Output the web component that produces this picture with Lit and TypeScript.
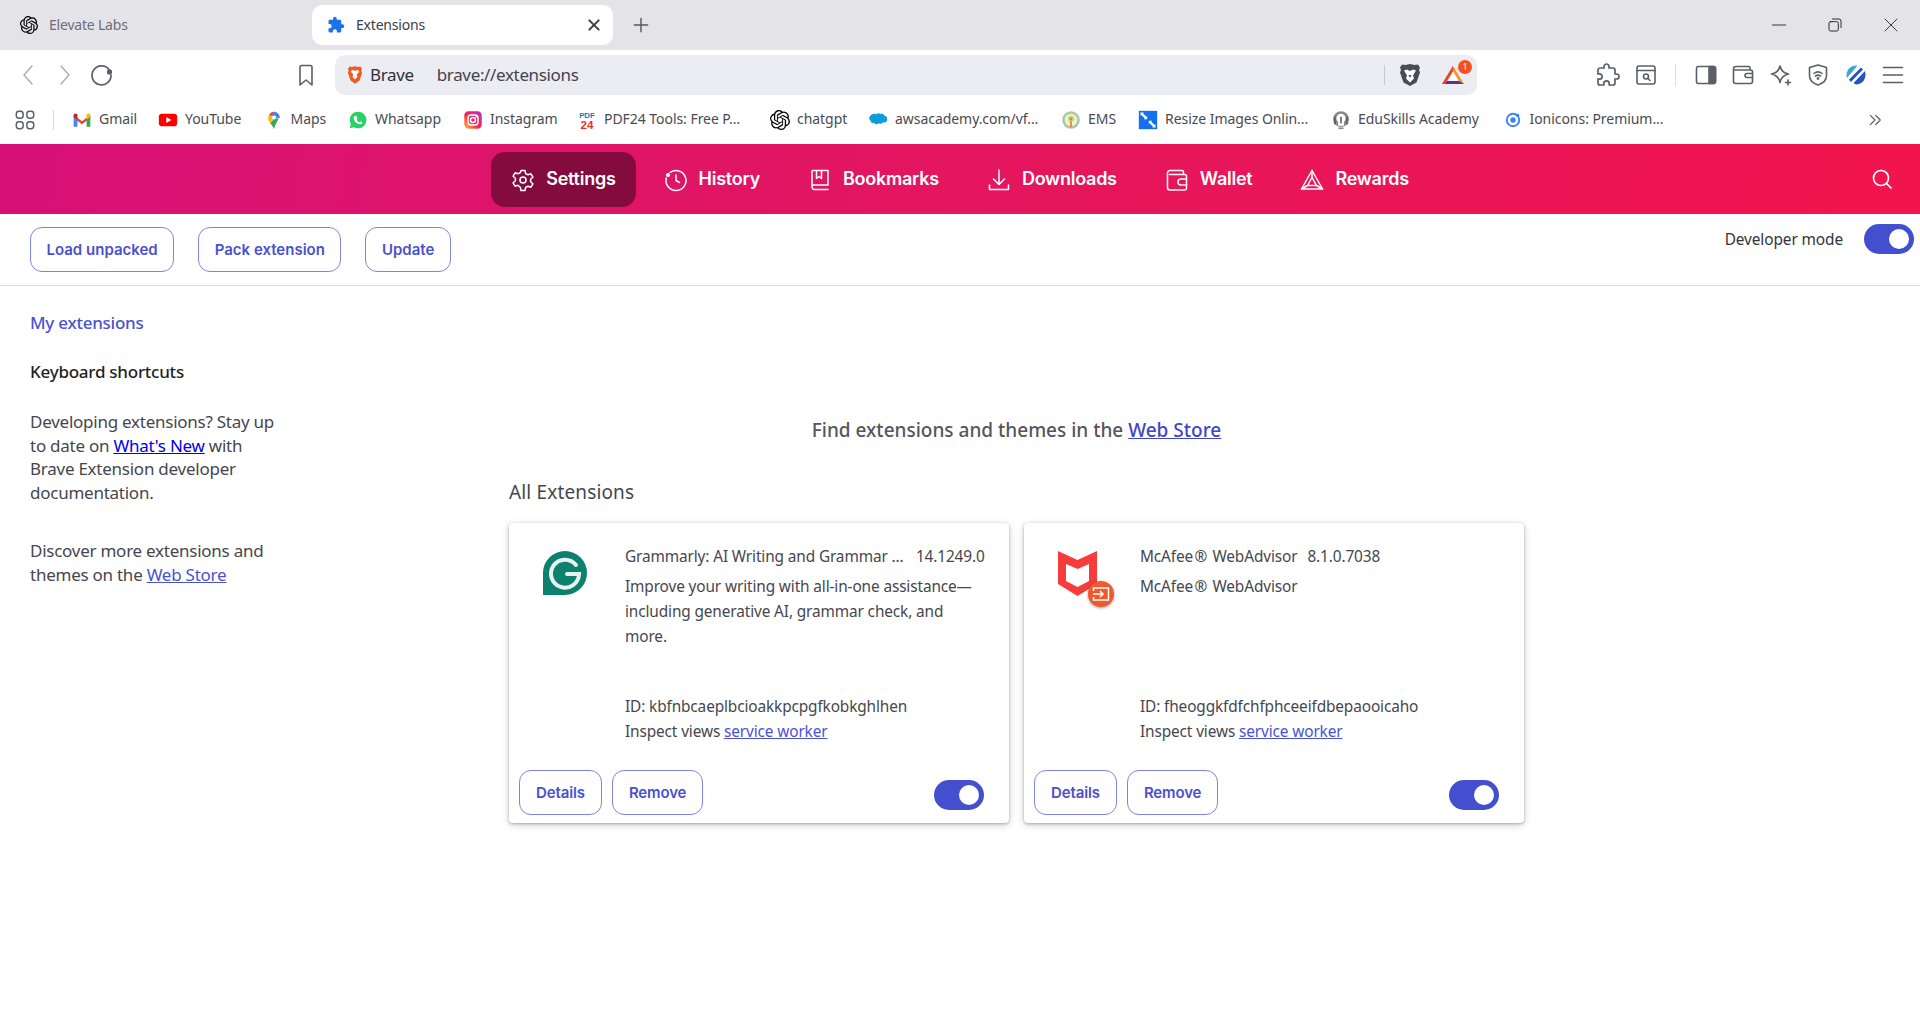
import { LitElement, css, html, svg } from 'lit';
import { customElement, property } from 'lit/decorators.js';

const openAi = svg`<path d="M22.2819 9.8211a5.9847 5.9847 0 0 0-.5157-4.9108 6.0462 6.0462 0 0 0-6.5098-2.9A6.0651 6.0651 0 0 0 4.9807 4.1818a5.9847 5.9847 0 0 0-3.9977 2.9 6.0462 6.0462 0 0 0 .7427 7.0966 5.98 5.98 0 0 0 .511 4.9107 6.051 6.051 0 0 0 6.5146 2.9001A5.9847 5.9847 0 0 0 13.2599 24a6.0557 6.0557 0 0 0 5.7718-4.2058 5.9894 5.9894 0 0 0 3.9977-2.9001 6.0557 6.0557 0 0 0-.7475-7.0729zm-9.022 12.6081a4.4755 4.4755 0 0 1-2.8764-1.0408l.1419-.0804 4.7783-2.7582a.7948.7948 0 0 0 .3927-.6813v-6.7369l2.02 1.1686a.071.071 0 0 1 .038.052v5.5826a4.504 4.504 0 0 1-4.4945 4.4944zm-9.6607-4.1254a4.4708 4.4708 0 0 1-.5346-3.0137l.142.0852 4.783 2.7582a.7712.7712 0 0 0 .7806 0l5.8428-3.3685v2.3324a.0804.0804 0 0 1-.0332.0615L9.74 19.9502a4.4992 4.4992 0 0 1-6.1408-1.6464zM2.3408 7.8956a4.485 4.485 0 0 1 2.3655-1.9728V11.6a.7664.7664 0 0 0 .3879.6765l5.8144 3.3543-2.0201 1.1685a.0757.0757 0 0 1-.071 0l-4.8303-2.7865A4.504 4.504 0 0 1 2.3408 7.872zm16.5963 3.8558L13.1038 8.364 15.1192 7.2a.0757.0757 0 0 1 .071 0l4.8303 2.7913a4.4944 4.4944 0 0 1-.6765 8.1042v-5.6772a.79.79 0 0 0-.407-.667zm2.0107-3.0231l-.142-.0852-4.7735-2.7818a.7759.7759 0 0 0-.7854 0L9.409 9.2297V6.8974a.0662.0662 0 0 1 .0284-.0615l4.8303-2.7866a4.4992 4.4992 0 0 1 6.6802 4.66zM8.3065 12.863l-2.02-1.1638a.0804.0804 0 0 1-.038-.0567V6.0742a4.4992 4.4992 0 0 1 7.3757-3.4537l-.142.0805L8.704 5.459a.7948.7948 0 0 0-.3927.6813zm1.0976-2.3654l2.602-1.4998 2.6069 1.4998v2.9994l-2.5974 1.4997-2.6067-1.4997Z"/>`;
const puzzle = 'M20.5 11H19V7c0-1.1-.9-2-2-2h-4V3.5C13 2.12 11.88 1 10.5 1S8 2.12 8 3.5V5H4c-1.1 0-1.99.9-1.99 2v3.8H3.5c1.49 0 2.7 1.21 2.7 2.7s-1.21 2.7-2.7 2.7H2V20c0 1.1.9 2 2 2h3.8v-1.5c0-1.49 1.21-2.7 2.7-2.7 1.49 0 2.7 1.21 2.7 2.7V22H17c1.1 0 2-.9 2-2v-4h1.5c1.38 0 2.5-1.12 2.5-2.5S21.88 11 20.5 11z';

const line = (size: number, body: unknown, color = '#5d5e68', width = 1.6) =>
  html`<svg width=${size} height=${size} viewBox="0 0 24 24" fill="none" stroke=${color} stroke-width=${width} stroke-linecap="round" stroke-linejoin="round">${body}</svg>`;
const solid = (size: number, body: unknown) =>
  html`<svg width=${size} height=${size} viewBox="0 0 24 24">${body}</svg>`;

const bookmarkIcons: Record<string, unknown> = {
  gmail: svg`<path fill="#ea4335" d="M2 6l10 7.5L22 6v3.5L12 17 2 9.5z"/><path fill="#4285f4" d="M2 8v12h4.5v-8.5z"/><path fill="#34a853" d="M22 8v12h-4.5v-8.5z"/><path fill="#c5221f" d="M2 6.5C2 4 4.5 3.500 6 4.700l.5.4v6.400L2 8z"/><path fill="#fbbc04" d="M17.5 5.100l.5-.4C19.5 3.500 22 4 22 6.500V8l-4.500 3.500z"/>`,
  youtube: svg`<rect x="1" y="4.5" width="22" height="15" rx="4" fill="#f00"/><path fill="#fff" d="M10 8.5v7l6-3.5z"/>`,
  maps: svg`<path fill="#34a853" d="M12 23c-1-3-3-5-4.500-7l5-6 5 .5c-1 2.500-4.500 7-5.500 12.500z"/><path fill="#fbbc04" d="M7.500 16C6 14 5 12.500 5 9.500c0-1.500.5-3 1.300-4L12 9.500z"/><path fill="#4285f4" d="M12 9.500L8 5.800 12 2c3.900 0 7 3.200 7 7.500l-4 .6z"/><path fill="#ea4335" d="M6.300 5.500C7.500 3.400 9.500 2 12 2L8.500 7.500z"/><circle cx="12" cy="9" r="2.5" fill="#fff"/>`,
  whatsapp: svg`<path fill="#25d366" d="M12 2a10 10 0 0 0-8.600 15L2 22l5.100-1.300A10 10 0 1 0 12 2z"/><path fill="#fff" d="M8.500 7c-.5 0-1.700 1-1.700 2.700 0 3.300 4.300 7.500 7.700 7.500 1.800 0 3-1.300 2.800-2.300l-2.400-1.300-1.100 1.200c-1.400-.4-3-2-3.500-3.400l1-1.100L10.300 7.500C10 7 9 7 8.500 7z"/>`,
  instagram: svg`<defs><linearGradient id="ig" x1="0" y1="1" x2="1" y2="0"><stop offset="0" stop-color="#fdc13b"/><stop offset=".45" stop-color="#f0274e"/><stop offset="1" stop-color="#b92bd0"/></linearGradient></defs><rect x="1.5" y="1.5" width="21" height="21" rx="5" fill="url(#ig)"/><rect x="6" y="6" width="12" height="12" rx="3.5" fill="none" stroke="#fff" stroke-width="1.7"/><circle cx="12" cy="12" r="3" fill="none" stroke="#fff" stroke-width="1.7"/><circle cx="16" cy="8" r="1" fill="#fff"/>`,
  pdf: svg`<text x="12" y="10" text-anchor="middle" font-family="Liberation Sans" font-weight="700" font-size="9.5" fill="#1976d2">PDF</text><text x="12" y="23" text-anchor="middle" font-family="Liberation Sans" font-weight="700" font-size="14" fill="#e5352b">24</text>`,
  chatgpt: openAi,
  aws: svg`<path fill="#0d9dda" d="M10 5c1.500-1.500 3.800-1.600 5-.2 1.700-.8 3.800 0 4.500 1.800 2.300.4 4 2.200 3.500 5-.4 2.700-3 4-5.400 3.300-1 1.700-3.300 2.200-4.800 1-1.400 1.800-4.200 1.700-5.100-.2C5.300 16.300 3 15 3.200 12.800 1 11.500.7 8.500 2.900 7c.7-2 3.900-3.500 7.100-2z"/>`,
  ems: svg`<circle cx="12" cy="12" r="10.5" fill="#a9c9a4"/><circle cx="12" cy="12" r="7.5" fill="#eef3d8"/><circle cx="12" cy="10.5" r="4" fill="#e8d95a"/><circle cx="12" cy="10.5" r="1.8" fill="#6fa3c7"/><path fill="#ef8a4e" d="M11 13h2l.5 8h-3z"/>`,
  resize: svg`<rect x="1" y="1" width="22" height="22" fill="#1570ef"/><path fill="#fff" d="M3 3h4l-1 1 4 4 1-1v4H7l1-1-4-4-1 1zM21 21h-4l1-1-4-4-1 1v-4h4l-1 1 4 4 1-1z"/>`,
  eduskills: svg`<circle cx="12" cy="11" r="9.5" fill="#8a8a8a"/><path fill="#fff" d="M12 4.500a5.500 5.500 0 0 0-3.500 9.700V19h7v-4.800A5.500 5.500 0 0 0 12 4.500z"/><path d="M3.500 8h2.500v9H3.500zM18 8h2.500v9H18zM11 8h2v8h-2z" fill="#666"/><path d="M9 21h6v2H9z" fill="#8a8a8a"/>`,
  ionicons: svg`<circle cx="12" cy="12" r="7.5" fill="none" stroke="#3880ff" stroke-width="2.2"/><circle cx="12" cy="12" r="3.2" fill="#3880ff"/><circle cx="17.5" cy="6.5" r="2" fill="#3880ff"/>`,
};

const bookmarks = [
  { key: 'gmail', label: 'Gmail', width: 37 },
  { key: 'youtube', label: 'YouTube', width: 56.5 },
  { key: 'maps', label: 'Maps', width: 35.5 },
  { key: 'whatsapp', label: 'Whatsapp', width: 66 },
  { key: 'instagram', label: 'Instagram', width: 65 },
  { key: 'pdf', label: 'PDF24 Tools: Free P...', width: 144 },
  { key: 'chatgpt', label: 'chatgpt', width: 49 },
  { key: 'aws', label: 'awsacademy.com/vf...', width: 144 },
  { key: 'ems', label: 'EMS', width: 28 },
  { key: 'resize', label: 'Resize Images Onlin...', width: 144 },
  { key: 'eduskills', label: 'EduSkills Academy', width: 122.5 },
  { key: 'ionicons', label: 'Ionicons: Premium...', width: 133 },
];

const navItems = [
  {
    label: 'Settings',
    icon: svg`<circle cx="12" cy="12" r="3"/><path d="M10 2.500h4l.6 3 2.400 1.300 2.900-1 2 3.400-2.300 2v2.600l2.300 2-2 3.400-2.900-1-2.400 1.300-.6 3h-4l-.6-3L7 17.200l-2.900 1-2-3.400 2.300-2v-2.600l-2.300-2 2-3.400 2.900 1 2.400-1.300z"/>`,
  },
  {
    label: 'History',
    icon: svg`<path d="M6 4.500A10 10 0 1 1 2.300 10"/><path d="M12 7v5.500l3.500 2"/><circle cx="4" cy="7" r="1.300" fill="#fff"/>`,
  },
  {
    label: 'Bookmarks',
    icon: svg`<path d="M4 19V3.500a1 1 0 0 1 1-1h15V17H6a2 2 0 0 0-2 2v0a2.500 2.500 0 0 0 2.500 2.500H20"/><path d="M8.500 3v7.500l2.500-2 2.500 2V3"/>`,
  },
  {
    label: 'Downloads',
    icon: svg`<path d="M12 2v14"/><path d="M6.500 11l5.500 5.500 5.500-5.500"/><path d="M2.500 17v4.500h19V17"/>`,
  },
  {
    label: 'Wallet',
    icon: svg`<path d="M18.500 6.500V4a1.500 1.500 0 0 0-1.500-1.500H5A2.500 2.500 0 0 0 2.500 5v14.500A2.500 2.500 0 0 0 5 22h14.500a2 2 0 0 0 2-2V8.500a2 2 0 0 0-2-2H4.500"/><path d="M21.500 11H16a3 3 0 0 0 0 6h5.500"/>`,
  },
  {
    label: 'Rewards',
    icon: svg`<path d="M12 2.500L22.500 21h-21z"/><path d="M12 9.500L16.500 17.500h-9z"/><path d="M12 2.500v7M1.500 21l6-3.500M22.500 21l-6-3.500"/>`,
  },
];

const outlineButton = css`
  .btn {
    box-sizing: border-box;
    height: 45px;
    padding: 0 16px 1px;
    display: inline-flex;
    align-items: center;
    justify-content: center;
    background: #fff;
    border: 1px solid #7c84e0;
    border-radius: 12px;
    color: #4a50cf;
    font: 600 15px/1 Inter, "Liberation Sans", sans-serif;
    white-space: nowrap;
  }
  .toggle {
    box-sizing: border-box;
    width: 50px;
    height: 30px;
    padding: 5px;
    display: flex;
    justify-content: flex-end;
    border-radius: 15px;
    background: #444fcf;
    flex: none;
  }
  .toggle i {
    width: 20px;
    height: 20px;
    border-radius: 50%;
    background: #fff;
  }
`;

@customElement('extension-card')
export class ExtensionCard extends LitElement {
  @property() name = '';
  @property() version = '';
  @property() description = '';
  @property() extId = '';
  @property() logo = 'grammarly';

  static styles = [
    outlineButton,
    css`
      :host {
        display: flex;
        flex-direction: column;
        box-sizing: border-box;
        width: 500px;
        height: 300px;
        background: #fff;
        border-radius: 4px;
        box-shadow: 0 1px 3px rgba(0, 0, 0, 0.28), 0 2px 8px rgba(0, 0, 0, 0.16);
        color: #46464e;
        font: 15.4px/25px "Noto Sans", sans-serif;
        letter-spacing: -0.13px;
      }
      .body {
        flex: 1;
        display: grid;
        grid-template-columns: 116px 1fr;
        padding: 21px 25px 26px 0;
      }
      .logo {
        position: relative;
        padding: 7px 0 0 34px;
      }
      .info {
        display: flex;
        flex-direction: column;
        min-width: 0;
      }
      .title {
        display: flex;
        gap: 10px;
        white-space: nowrap;
      }
      .desc {
        margin-top: 5px;
      }
      .meta {
        margin-top: auto;
      }
      .meta a {
        color: #4a52d0;
      }
      .footer {
        display: flex;
        gap: 10px;
        padding: 0 25px 8px 10px;
      }
      .footer .toggle {
        margin: 10px 0 0 auto;
      }
      .badge {
        position: absolute;
        left: 64px;
        top: 37px;
        width: 26px;
        height: 26px;
        border-radius: 50%;
        background: #f0592b;
        box-shadow: 0 1px 3px rgba(0, 0, 0, 0.4);
        display: flex;
        align-items: center;
        justify-content: center;
      }
    `,
  ];

  private renderLogo() {
    if (this.logo === 'grammarly') {
      return html`<svg width="44" height="44" viewBox="0 0 44 44">
        <path fill="#0b816e" d="M22 0a22 22 0 0 1 0 44H0V22A22 22 0 0 1 22 0z" />
        <path fill="none" stroke="#e8f3f1" stroke-width="4" stroke-linecap="round" d="M33 14a14 14 0 1 0 3 9H24" />
      </svg>`;
    }
    return html`<svg width="39" height="45" viewBox="0 0 39 45">
        <path fill="#f83c3c" fill-rule="evenodd" d="M0 0l19.5 9L39 0v33L19.5 45 0 33zM8 13v17l11.5 6L31 30V13l-11.5 5z" />
      </svg>
      <span class="badge">
        <svg width="18" height="18" viewBox="0 0 18 18" fill="none" stroke="#fff" stroke-width="1.5">
          <path d="M1.5 6V3h15v12h-15v-3" />
          <path d="M1 9h10M8 6l3 3-3 3" />
        </svg>
      </span>`;
  }

  render() {
    return html`
      <div class="body">
        <div class="logo">${this.renderLogo()}</div>
        <div class="info">
          <div class="title">
            <span>${this.name}</span>
            <span>${this.version}</span>
          </div>
          <div class="desc">${this.description}</div>
          <div class="meta">
            <div>ID: ${this.extId}</div>
            <div>Inspect views <a href="#">service worker</a></div>
          </div>
        </div>
      </div>
      <div class="footer">
        <span class="btn">Details</span>
        <span class="btn">Remove</span>
        <span class="toggle"><i></i></span>
      </div>
    `;
  }
}

@customElement('app-root')
export class AppRoot extends LitElement {
  static styles = [
    outlineButton,
    css`
      :host {
        display: block;
        width: 1920px;
        height: 1020px;
        overflow: hidden;
        background: #fff;
        font-family: "Noto Sans", sans-serif;
        color: #46464e;
      }
      a {
        color: #4a52d0;
      }
      svg {
        display: block;
        flex: none;
      }
      .tabstrip {
        height: 50px;
        display: flex;
        align-items: center;
        background: #e3e3e8;
        font-size: 14px;
        letter-spacing: -0.2px;
      }
      .tab {
        display: flex;
        align-items: center;
        gap: 11px;
        box-sizing: border-box;
        height: 40px;
        padding-left: 20px;
        width: 312px;
        color: #6d6d77;
      }
      .tab > span {
        padding-bottom: 2px;
      }
      .tab.active {
        width: 301px;
        padding: 0 11px 0 15px;
        border-radius: 10px;
        background: #fff;
        color: #3d3d47;
      }
      .tab .close {
        margin-left: auto;
        padding: 0;
      }
      .newtab {
        margin-left: 18px;
      }
      .winctl {
        margin-left: auto;
        display: flex;
        gap: 40px;
        padding-right: 21px;
      }
      .toolbar {
        height: 45px;
        display: flex;
        align-items: flex-start;
        padding: 5px 0 0 16px;
        box-sizing: border-box;
      }
      .tb {
        width: 24px;
        height: 24px;
        margin-top: 8px;
        display: flex;
        align-items: center;
        justify-content: center;
      }
      .tb-nav {
        display: flex;
        gap: 13px;
      }
      .tb-mark {
        margin: 8px 17px 0 180px;
      }
      .omnibox {
        width: 1142px;
        height: 40px;
        box-sizing: border-box;
        padding: 0 12px 0 10px;
        display: flex;
        align-items: center;
        background: #ecedf2;
        border-radius: 10px;
        font-size: 17px;
        letter-spacing: -0.35px;
      }
      .omni-brand {
        margin-left: 5px;
        padding-bottom: 2px;
        color: #2f2f38;
      }
      .omni-url {
        margin-left: 23px;
        padding-bottom: 2px;
        color: #44444e;
      }
      .omni-sep {
        margin-left: auto;
        width: 1px;
        height: 20px;
        background: #c9c9cf;
      }
      .lion {
        margin: 0 19px 0 13px;
      }
      .bat {
        position: relative;
        width: 24px;
        height: 24px;
      }
      .bat b {
        position: absolute;
        left: 17px;
        top: -3px;
        width: 14px;
        height: 14px;
        border-radius: 50%;
        background: #f4511e;
        color: #fff;
        font: 400 9px/14px "Noto Sans", sans-serif;
        letter-spacing: 0;
        text-align: center;
      }
      .tb-right {
        display: flex;
        align-items: center;
        gap: 13.5px;
        margin-left: 119px;
      }
      .tb-sep {
        width: 1px;
        height: 22px;
        margin: 8px 4px 0;
        background: #dcdce1;
      }
      .bookmarks {
        height: 49px;
        display: flex;
        align-items: center;
        padding-left: 14px;
        font-size: 14px;
        letter-spacing: -0.05px;
        color: #4a4a52;
        box-sizing: border-box;
      }
      .apps {
        margin-right: 17px;
      }
      .bm-sep {
        width: 1px;
        height: 20px;
        background: #dcdce1;
        margin-right: 18px;
      }
      .bm {
        display: flex;
        align-items: center;
        gap: 7px;
        margin-right: 22px;
        white-space: nowrap;
      }
      .bm span {
        display: block;
        padding-bottom: 2px;
      }
      .more {
        margin-left: 183px;
      }
      .nav {
        height: 70px;
        display: grid;
        grid-template-columns: 1fr auto 1fr;
        background: linear-gradient(100deg, #d81178 0%, #e4165e 50%, #f2144e 100%);
        color: #fff;
      }
      .nav-items {
        grid-column: 2;
        display: flex;
        gap: 8px;
        padding-top: 8px;
      }
      .nav-item {
        height: 55px;
        display: flex;
        align-items: center;
        gap: 11px;
        padding: 0 20px;
        border-radius: 14px;
        font: 600 18px/1 Inter, sans-serif;
        letter-spacing: -0.25px;
      }
      .nav-item span {
        padding-bottom: 1px;
      }
      .nav-item.active {
        background: #840b3e;
      }
      .nav-search {
        justify-self: end;
        align-self: center;
        padding-right: 26px;
      }
      .actions {
        box-sizing: border-box;
        height: 72px;
        padding: 13px 6px 0 30px;
        display: flex;
        justify-content: space-between;
        align-items: flex-start;
        border-bottom: 1px solid #dcdcdc;
      }
      .action-btns {
        display: flex;
        gap: 24px;
      }
      .action-btns .btn {
        padding: 0 15.5px 1px;
      }
      .devmode {
        display: flex;
        align-items: center;
        gap: 21px;
        margin-top: -3px;
        font-size: 15.4px;
        letter-spacing: -0.1px;
        color: #33333b;
      }
      .content {
        display: grid;
        grid-template-columns: 509px 1015px;
      }
      .sidebar {
        padding: 25px 0 0 30px;
        font-size: 17px;
        line-height: 23.5px;
        letter-spacing: -0.25px;
      }
      .sidebar p {
        margin: 0 0 35px;
        white-space: nowrap;
      }
      .side-link {
        color: #4a52d0;
        font-weight: 500;
        margin-bottom: 25px;
      }
      .side-title {
        color: #1f1f26;
        font-weight: 500;
        margin-bottom: 27px;
      }
      .side-new {
        color: #0000ee;
      }
      .main {
        padding-top: 131px;
      }
      .find {
        text-align: center;
        font-size: 19px;
        line-height: 26px;
        font-weight: 500;
        color: #55555d;
      }
      .find a {
        color: #3f46c8;
      }
      .section {
        margin: 36px 0 18px;
        font-size: 19px;
        line-height: 26px;
        letter-spacing: 0.15px;
      }
      .cards {
        display: flex;
        gap: 15px;
      }
    `,
  ];

  render() {
    return html`
      <div class="tabstrip">
        <div class="tab">
          ${solid(18, openAi)}
          <span>Elevate Labs</span>
        </div>
        <div class="tab active">
          ${solid(18, svg`<path fill="#1a73e8" d=${puzzle} />`)}
          <span>Extensions</span>
          <span class="close">${line(16, svg`<path d="M5 5l14 14M19 5L5 19" />`, '#3d3d47', 3)}</span>
        </div>
        <span class="newtab">${line(20, svg`<path d="M12 4v16M4 12h16" />`, '#55555e', 1.7)}</span>
        <div class="winctl">
          ${line(16, svg`<path d="M2 12h20" />`, '#222', 1.3)}
          ${line(16, svg`<rect x="3" y="7" width="14" height="14" rx="2.5" /><path d="M8 3h10a3 3 0 0 1 3 3v10" />`, '#222', 1.4)}
          ${line(16, svg`<path d="M3 3l18 18M21 3L3 21" />`, '#222', 1.3)}
        </div>
      </div>

      <div class="toolbar">
        <div class="tb-nav">
          <span class="tb">${line(24, svg`<path d="M16 3l-8 9 8 9" />`, '#abacb5', 1.4)}</span>
          <span class="tb">${line(24, svg`<path d="M8 3l8 9-8 9" />`, '#abacb5', 1.4)}</span>
          <span class="tb">${line(24, svg`<path d="M19 6.5A9.5 9.5 0 1 0 21 12" /><circle cx="19.5" cy="9" r="1.8" fill="#5d5e68" />`, '#5d5e68', 1.7)}</span>
        </div>
        <span class="tb tb-mark">${line(24, svg`<path d="M6 4a1.5 1.5 0 0 1 1.5-1.5h9A1.5 1.5 0 0 1 18 4v18l-6-5-6 5z" />`)}</span>
        <div class="omnibox">
          ${solid(20, svg`<path fill="#f15a22" d="M12 1.500l4 .8 2.500-.5 2 3-1 2 1 2.500-3 9.200-5.500 4-5.500-4-3-9.200 1-2.500-1-2 2-3 2.500.5z" /><path fill="#fff" d="M12 7l3.500-1 1.500 2-3 3.500 1 2.500-3 3.500-3-3.500 1-2.500L7 8l1.500-2z" />`)}
          <span class="omni-brand">Brave</span>
          <span class="omni-url">brave://extensions</span>
          <span class="omni-sep"></span>
          <span class="lion">${solid(24, svg`<path fill="#4a4b57" d="M12 1l4.500 1 3.500-.5 2 3-1 2.500 1 2.500-3.500 10L12 23l-6.500-3.500L2 9.500 3 7 2 4.500l2-3 3.500.5z" /><path fill="#fff" d="M12 8l3-1.500 3 1-3 5 1 3-4 4-4-4 1-3-3-5 3-1z" /><path fill="#4a4b57" d="M10.500 12h3l-1.500 3z" />`)}</span>
          <span class="bat">
            ${solid(24, svg`<path fill="#ff4b24" d="M12 3L1 21l5-3 6-10z" /><path fill="#f7931e" d="M12 3l11 18-5-3-6-10z" /><path fill="#662d91" d="M1 21h22l-5-3H6z" /><path fill="#fff" d="M12 9l5 8.500H7z" /><path fill="#e8472a" d="M12 3L1 21h3l8-13z" />`)}
            <b>1</b>
          </span>
        </div>
        <div class="tb-right">
          <span class="tb">${solid(24, svg`<path fill="none" stroke="#5d5e68" stroke-width="1.7" d=${puzzle} />`)}</span>
          <span class="tb">${line(24, svg`<rect x="3" y="3" width="18" height="18" rx="2" /><path d="M3 7.5h18" /><circle cx="12" cy="13.5" r="2.5" /><path d="M14 15.5l2 2" />`)}</span>
          <span class="tb-sep"></span>
          <span class="tb">${line(24, svg`<rect x="2.5" y="3.5" width="19" height="17" rx="2" /><path fill="#5d5e68" d="M15 3.5h4.5a2 2 0 0 1 2 2v13a2 2 0 0 1-2 2H15z" />`)}</span>
          <span class="tb">${line(24, svg`<path d="M19 7V5a1.500 1.500 0 0 0-1.500-1.500H5A2.500 2.500 0 0 0 2.500 6v12.500a2 2 0 0 0 2 2h15a2 2 0 0 0 2-2V9a2 2 0 0 0-2-2H4" /><path d="M21.500 10.500H16a2 2 0 0 0 0 4h5.500" />`)}</span>
          <span class="tb">${line(24, svg`<path d="M11 3c1 5 3.500 7 8.500 8-5 1-7.500 3.500-8.500 8.500-1-5-3.500-7.500-8.500-8.500 5-1 7.500-3 8.500-8z" /><path d="M19 17v5M16.500 19.500h5" />`)}</span>
          <span class="tb">${line(24, svg`<path d="M12 2l8.500 2.500v8c0 4.500-4 8-8.500 9.500-4.500-1.500-8.500-5-8.500-9.500v-8z" /><path d="M8 10.500c2.500-2 5.500-2 8 0M9.500 13c1.500-1 3.500-1 5 0" /><circle cx="12" cy="15.5" r=".6" />`)}</span>
          <span class="tb">${solid(24, svg`<path fill="#3ba8d4" d="M12 2.500C7 2.500 2.500 6.500 2.500 12c0 1 .2 2 .5 3L13.500 2.600z" /><path fill="#2456b8" d="M17 4.500L5 16.500l1.800 2.500L19 6.500zM21 8L9.500 20l2.500 1.500c5.500 0 9.500-4.500 9.500-9.500 0-1.500-.2-2.700-.5-4z" />`)}</span>
          <span class="tb">${line(24, svg`<path d="M2.500 4.500h19M2.500 12h19M2.500 19.500h19" />`)}</span>
        </div>
      </div>

      <div class="bookmarks">
        <span class="apps">${line(22, svg`<rect x="2.5" y="2.5" width="7.5" height="7.5" rx="3" /><rect x="14" y="2.5" width="7.5" height="7.5" rx="3" /><rect x="2.5" y="14" width="7.5" height="7.5" rx="3" /><rect x="14" y="14" width="7.5" height="7.5" rx="3" />`)}</span>
        <span class="bm-sep"></span>
        ${bookmarks.map(
          (b) => html`<div class="bm">
            ${solid(20, bookmarkIcons[b.key])}
            <span style="width:${b.width}px">${b.label}</span>
          </div>`,
        )}
        <span class="more">${line(14, svg`<path d="M4 4l8 8-8 8M13 4l8 8-8 8" />`, '#5d5e68', 2.2)}</span>
      </div>

      <div class="nav">
        <div class="nav-items">
          ${navItems.map(
            (item, i) => html`<div class="nav-item ${i === 0 ? 'active' : ''}">
              ${line(24, item.icon, '#fff', 1.5)}
              <span>${item.label}</span>
            </div>`,
          )}
        </div>
        <div class="nav-search">
          ${line(24, svg`<circle cx="11" cy="11" r="7.5" /><path d="M16.5 16.5L21 21" />`, '#fff', 1.7)}
        </div>
      </div>

      <div class="actions">
        <div class="action-btns">
          <span class="btn">Load unpacked</span>
          <span class="btn">Pack extension</span>
          <span class="btn">Update</span>
        </div>
        <div class="devmode">
          <span>Developer mode</span>
          <span class="toggle"><i></i></span>
        </div>
      </div>

      <div class="content">
        <aside class="sidebar">
          <div class="side-link">My extensions</div>
          <div class="side-title">Keyboard shortcuts</div>
          <p>
            Developing extensions? Stay up<br />
            to date on <a class="side-new" href="#">What's New</a> with<br />
            Brave Extension developer<br />
            documentation.
          </p>
          <p>Discover more extensions and<br />themes on the <a href="#">Web Store</a></p>
        </aside>
        <main class="main">
          <div class="find">Find extensions and themes in the <a href="#">Web Store</a></div>
          <div class="section">All Extensions</div>
          <div class="cards">
            <extension-card
              name="Grammarly: AI Writing and Grammar ...&#8201;"
              version="14.1249.0"
              description="Improve your writing with all-in-one assistance—including generative AI, grammar check, and more."
              extId="kbfnbcaeplbcioakkpcpgfkobkghlhen"
              logo="grammarly"
            ></extension-card>
            <extension-card
              name="McAfee&#8202;®&#8202; WebAdvisor"
              version="8.1.0.7038"
              description="McAfee&#8202;®&#8202; WebAdvisor"
              extId="fheoggkfdfchfphceeifdbepaooicaho"
              logo="mcafee"
            ></extension-card>
          </div>
        </main>
      </div>
    `;
  }
}
